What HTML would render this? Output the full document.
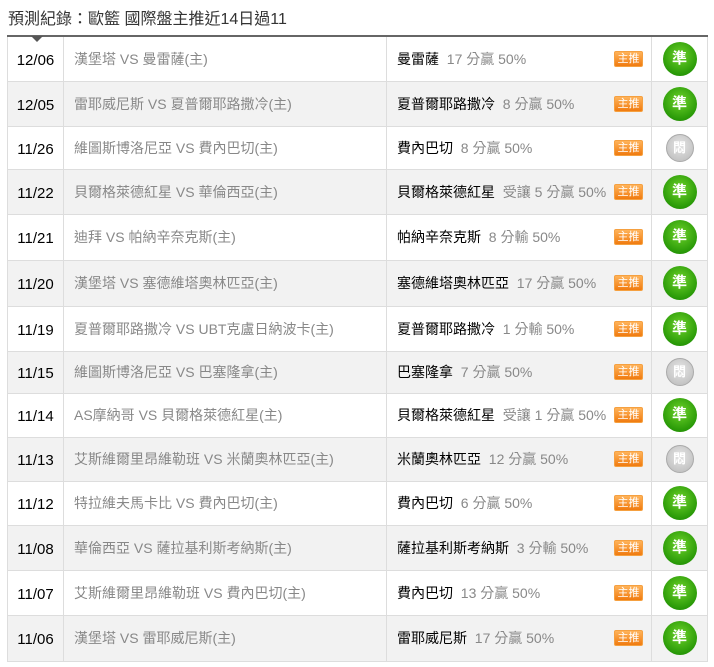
<!DOCTYPE html>
<html><head><meta charset="utf-8"><style>
*{margin:0;padding:0;box-sizing:border-box}
body{width:714px;height:667px;background:#fff;font-family:"Liberation Sans","Noto Sans CJK TC",sans-serif;position:relative;overflow:hidden}
.t{position:absolute;left:8px;top:5px;font-size:16px;color:#333}
table{position:absolute;left:7px;top:35px;width:701px;border-collapse:collapse;border-top:2px solid #666}
td{border:1px solid #ddd;font-size:14px;padding:0;vertical-align:middle}
tr.g td{background:#f2f2f2}
td.d{width:56px;text-align:center;color:#000;font-size:15px;padding-top:3px}
td.m{width:323px;padding-left:10px;color:#888}
td.p{width:265px;padding-left:10px;color:#000;position:relative}
td.p span{color:#888}
td.i{text-align:center}
.b{position:absolute;left:227px;top:50%;margin-top:-8px;width:29px;height:16px;background:linear-gradient(#ffb35a,#f07b10);border:1px solid #f5a040;color:#fff;font-size:11px;line-height:14px;text-align:center;border-radius:2px}
.c{display:inline-block;width:34px;height:34px;border-radius:50%;background:radial-gradient(circle at 50% 40%,#6ed32a,#2a9a08 70%,#1b7a03);color:#fff;font-size:15px;line-height:34px;font-weight:bold;vertical-align:middle}
.x{display:inline-block;width:28px;height:28px;border-radius:50%;background:radial-gradient(circle at 50% 40%,#e5e5e5,#b8b8b8);border:1px solid #aaa;color:#fff;font-size:13px;line-height:26px;font-weight:bold;vertical-align:middle}
.tri{position:absolute;left:31px;top:36px;width:0;height:0;border-left:6px solid transparent;border-right:6px solid transparent;border-top:6px solid #555}
</style></head><body>
<div class="t">預測紀錄：歐籃 國際盤主推近14日過11</div>
<table>
<tr style="height:45px"><td class="d">12/06</td><td class="m">漢堡塔 VS 曼雷薩(主)</td><td class="p">曼雷薩 <span>&nbsp;17 分贏 50%</span><div class="b">主推</div></td><td class="i"><span class="c">準</span></td></tr>
<tr class="g" style="height:45px"><td class="d">12/05</td><td class="m">雷耶威尼斯 VS 夏普爾耶路撒冷(主)</td><td class="p">夏普爾耶路撒冷 <span>&nbsp;8 分贏 50%</span><div class="b">主推</div></td><td class="i"><span class="c">準</span></td></tr>
<tr style="height:43px"><td class="d">11/26</td><td class="m">維圖斯博洛尼亞 VS 費內巴切(主)</td><td class="p">費內巴切 <span>&nbsp;8 分贏 50%</span><div class="b">主推</div></td><td class="i"><span class="x">悶</span></td></tr>
<tr class="g" style="height:45px"><td class="d">11/22</td><td class="m">貝爾格萊德紅星 VS 華倫西亞(主)</td><td class="p">貝爾格萊德紅星 <span>&nbsp;受讓 5 分贏 50%</span><div class="b">主推</div></td><td class="i"><span class="c">準</span></td></tr>
<tr style="height:46px"><td class="d">11/21</td><td class="m">迪拜 VS 帕納辛奈克斯(主)</td><td class="p">帕納辛奈克斯 <span>&nbsp;8 分輸 50%</span><div class="b">主推</div></td><td class="i"><span class="c">準</span></td></tr>
<tr class="g" style="height:46px"><td class="d">11/20</td><td class="m">漢堡塔 VS 塞德維塔奧林匹亞(主)</td><td class="p">塞德維塔奧林匹亞 <span>&nbsp;17 分贏 50%</span><div class="b">主推</div></td><td class="i"><span class="c">準</span></td></tr>
<tr style="height:45px"><td class="d">11/19</td><td class="m">夏普爾耶路撒冷 VS UBT克盧日納波卡(主)</td><td class="p">夏普爾耶路撒冷 <span>&nbsp;1 分輸 50%</span><div class="b">主推</div></td><td class="i"><span class="c">準</span></td></tr>
<tr class="g" style="height:42px"><td class="d">11/15</td><td class="m">維圖斯博洛尼亞 VS 巴塞隆拿(主)</td><td class="p">巴塞隆拿 <span>&nbsp;7 分贏 50%</span><div class="b">主推</div></td><td class="i"><span class="x">悶</span></td></tr>
<tr style="height:44px"><td class="d">11/14</td><td class="m">AS摩納哥 VS 貝爾格萊德紅星(主)</td><td class="p">貝爾格萊德紅星 <span>&nbsp;受讓 1 分贏 50%</span><div class="b">主推</div></td><td class="i"><span class="c">準</span></td></tr>
<tr class="g" style="height:44px"><td class="d">11/13</td><td class="m">艾斯維爾里昂維勒班 VS 米蘭奧林匹亞(主)</td><td class="p">米蘭奧林匹亞 <span>&nbsp;12 分贏 50%</span><div class="b">主推</div></td><td class="i"><span class="x">悶</span></td></tr>
<tr style="height:44px"><td class="d">11/12</td><td class="m">特拉維夫馬卡比 VS 費內巴切(主)</td><td class="p">費內巴切 <span>&nbsp;6 分贏 50%</span><div class="b">主推</div></td><td class="i"><span class="c">準</span></td></tr>
<tr class="g" style="height:45px"><td class="d">11/08</td><td class="m">華倫西亞 VS 薩拉基利斯考納斯(主)</td><td class="p">薩拉基利斯考納斯 <span>&nbsp;3 分輸 50%</span><div class="b">主推</div></td><td class="i"><span class="c">準</span></td></tr>
<tr style="height:45px"><td class="d">11/07</td><td class="m">艾斯維爾里昂維勒班 VS 費內巴切(主)</td><td class="p">費內巴切 <span>&nbsp;13 分贏 50%</span><div class="b">主推</div></td><td class="i"><span class="c">準</span></td></tr>
<tr class="g" style="height:46px"><td class="d">11/06</td><td class="m">漢堡塔 VS 雷耶威尼斯(主)</td><td class="p">雷耶威尼斯 <span>&nbsp;17 分贏 50%</span><div class="b">主推</div></td><td class="i"><span class="c">準</span></td></tr>
</table>
<div class="tri"></div>
</body></html>
